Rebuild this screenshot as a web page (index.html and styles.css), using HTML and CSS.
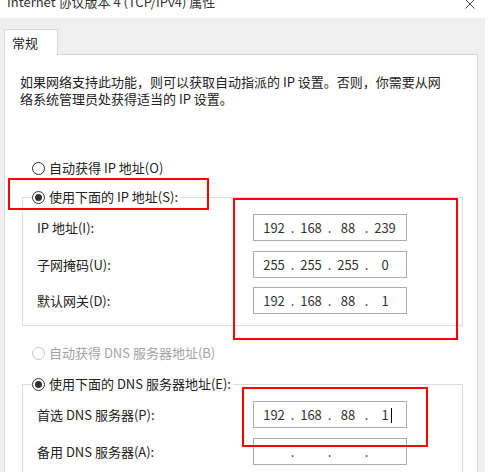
FILE: index.html
```html
<!DOCTYPE html>
<html lang="zh-CN">
<head>
<meta charset="utf-8">
<title>Internet 协议版本 4 (TCP/IPv4) 属性</title>
<link rel="stylesheet" href="styles.css">
</head>
<body>
<div class="window">
  <div class="titlebar">
    <span class="title">Internet 协议版本 4 (TCP/IPv4) 属性</span>
    <svg class="close" width="10" height="10" viewBox="0 0 10 10" aria-hidden="true"><path d="M0.5 0.5 L9.5 9.5 M9.5 0.5 L0.5 9.5" stroke="#444" stroke-width="1" fill="none"/></svg>
  </div>
  <div class="client">
    <div class="tab">常规</div>
    <div class="panel">
      <p class="desc">如果网络支持此功能，则可以获取自动指派的 IP 设置。否则，你需要从网<br>络系统管理员处获得适当的 IP 设置。</p>

      <div class="option auto-ip"><span class="radio"></span><span>自动获得 IP 地址(O)</span></div>

      <fieldset class="group">
        <legend class="option"><span class="radio checked"></span><span>使用下面的 IP 地址(S):</span></legend>
        <div class="rows">
          <div class="row"><span class="label">IP 地址(I):</span>
            <div class="ipbox"><span class="oct">192</span><span class="dot">.</span><span class="oct">168</span><span class="dot">.</span><span class="oct">88</span><span class="dot">.</span><span class="oct">239</span></div>
          </div>
          <div class="row"><span class="label">子网掩码(U):</span>
            <div class="ipbox"><span class="oct">255</span><span class="dot">.</span><span class="oct">255</span><span class="dot">.</span><span class="oct">255</span><span class="dot">.</span><span class="oct">0</span></div>
          </div>
          <div class="row"><span class="label">默认网关(D):</span>
            <div class="ipbox"><span class="oct">192</span><span class="dot">.</span><span class="oct">168</span><span class="dot">.</span><span class="oct">88</span><span class="dot">.</span><span class="oct">1</span></div>
          </div>
        </div>
      </fieldset>

      <div class="option auto-dns disabled"><span class="radio"></span><span>自动获得 DNS 服务器地址(B)</span></div>

      <fieldset class="group dns">
        <legend class="option"><span class="radio checked"></span><span>使用下面的 DNS 服务器地址(E):</span></legend>
        <div class="rows">
          <div class="row"><span class="label">首选 DNS 服务器(P):</span>
            <div class="ipbox"><span class="oct">192</span><span class="dot">.</span><span class="oct">168</span><span class="dot">.</span><span class="oct">88</span><span class="dot">.</span><span class="oct">1<span class="caret"></span></span></div>
          </div>
          <div class="row"><span class="label">备用 DNS 服务器(A):</span>
            <div class="ipbox"><span class="oct"></span><span class="dot">.</span><span class="oct"></span><span class="dot">.</span><span class="oct"></span><span class="dot">.</span><span class="oct"></span></div>
          </div>
        </div>
      </fieldset>
    </div>
  </div>

  <div class="mark mark-option"></div>
  <div class="mark mark-ip"></div>
  <div class="mark mark-dns"></div>
</div>
</body>
</html>
```
FILE: styles.css
```css
html, body {
  margin: 0;
  padding: 0;
  background: #ffffff;
  overflow: hidden;
}

body {
  font-family: "Noto Sans CJK SC", "Noto Sans", sans-serif;
  font-size: 13px;
  color: #222222;
}

.window {
  position: relative;
  width: 488px;
  height: 472px;
  overflow: hidden;
}

.titlebar {
  display: flex;
  align-items: flex-start;
  height: 18px;
  background: #ffffff;
  overflow: hidden;
}

.title {
  margin: -5px 0 0 7px;
  line-height: 13px;
  font-size: 13px;
  color: #333333;
  white-space: nowrap;
}

.close {
  margin: -1px 13px 0 auto;
  flex-shrink: 0;
}

.client {
  width: 485px;
  height: 454px;
  box-sizing: border-box;
  padding: 11px 0 0 4px;
  background: #f0f0f0;
  overflow: hidden;
}

.tab {
  position: relative;
  z-index: 1;
  width: 54px;
  height: 26px;
  box-sizing: border-box;
  margin-bottom: -1px;
  padding-left: 7px;
  border: 1px solid #d9d9d9;
  border-bottom: none;
  background: #ffffff;
  line-height: 25px;
  color: #222222;
}

.panel {
  width: 474px;
  height: 500px;
  box-sizing: border-box;
  border: 1px solid #d9d9d9;
  background: #ffffff;
}

.desc {
  margin: 0;
  padding: 18px 0 0 15px;
  line-height: 17px;
  white-space: nowrap;
}

.option {
  display: flex;
  align-items: center;
  gap: 4px;
  height: 20px;
  line-height: 20px;
  white-space: nowrap;
}

.auto-ip {
  margin-top: 51px;
  padding-left: 27px;
}

.auto-dns {
  margin-top: 17px;
  padding-left: 27px;
}

.disabled {
  color: #a3a3a3;
}

.radio {
  display: inline-flex;
  align-items: center;
  justify-content: center;
  flex-shrink: 0;
  width: 13px;
  height: 13px;
  box-sizing: border-box;
  border: 1px solid #333333;
  border-radius: 50%;
  background: #ffffff;
}

.disabled .radio {
  border-color: #c6c6c6;
}

.radio.checked::after {
  content: "";
  width: 7px;
  height: 7px;
  border-radius: 50%;
  background: #333333;
}

.group {
  width: 441px;
  min-width: 0;
  box-sizing: border-box;
  margin: 9px 0 0 17px;
  padding: 0 0 11px 9px;
  border: 1px solid #dcdcdc;
}

.group.dns {
  margin-top: 11px;
}

.group legend {
  padding: 0 2px 0 0;
  margin: 0;
}

.rows {
  display: flex;
  flex-direction: column;
  gap: 9.5px;
  padding-top: 7px;
}

.row {
  display: flex;
  align-items: center;
  height: 27px;
}

.label {
  width: 221px;
  flex-shrink: 0;
  box-sizing: border-box;
  padding-left: 5px;
  white-space: nowrap;
}

.ipbox {
  display: flex;
  align-items: center;
  width: 154px;
  height: 27px;
  box-sizing: border-box;
  padding-left: 5px;
  border: 1px solid #adadad;
  background: #ffffff;
  color: #333333;
  line-height: 25px;
}

.oct {
  width: 30px;
  text-align: center;
  white-space: nowrap;
}

.dot {
  width: 7px;
  text-align: center;
}

.caret {
  display: inline-block;
  width: 0;
  height: 15px;
  margin: 0 -3px 0 2px;
  border-left: 1px solid #000000;
  vertical-align: -3px;
}

.mark {
  position: absolute;
  box-sizing: border-box;
  border: 2px solid #ff0000;
}

.mark-option {
  left: 8px;
  top: 178px;
  width: 201px;
  height: 32px;
}

.mark-ip {
  left: 233px;
  top: 198px;
  width: 225px;
  height: 142px;
}

.mark-dns {
  left: 242px;
  top: 387px;
  width: 186px;
  height: 60px;
}
```
